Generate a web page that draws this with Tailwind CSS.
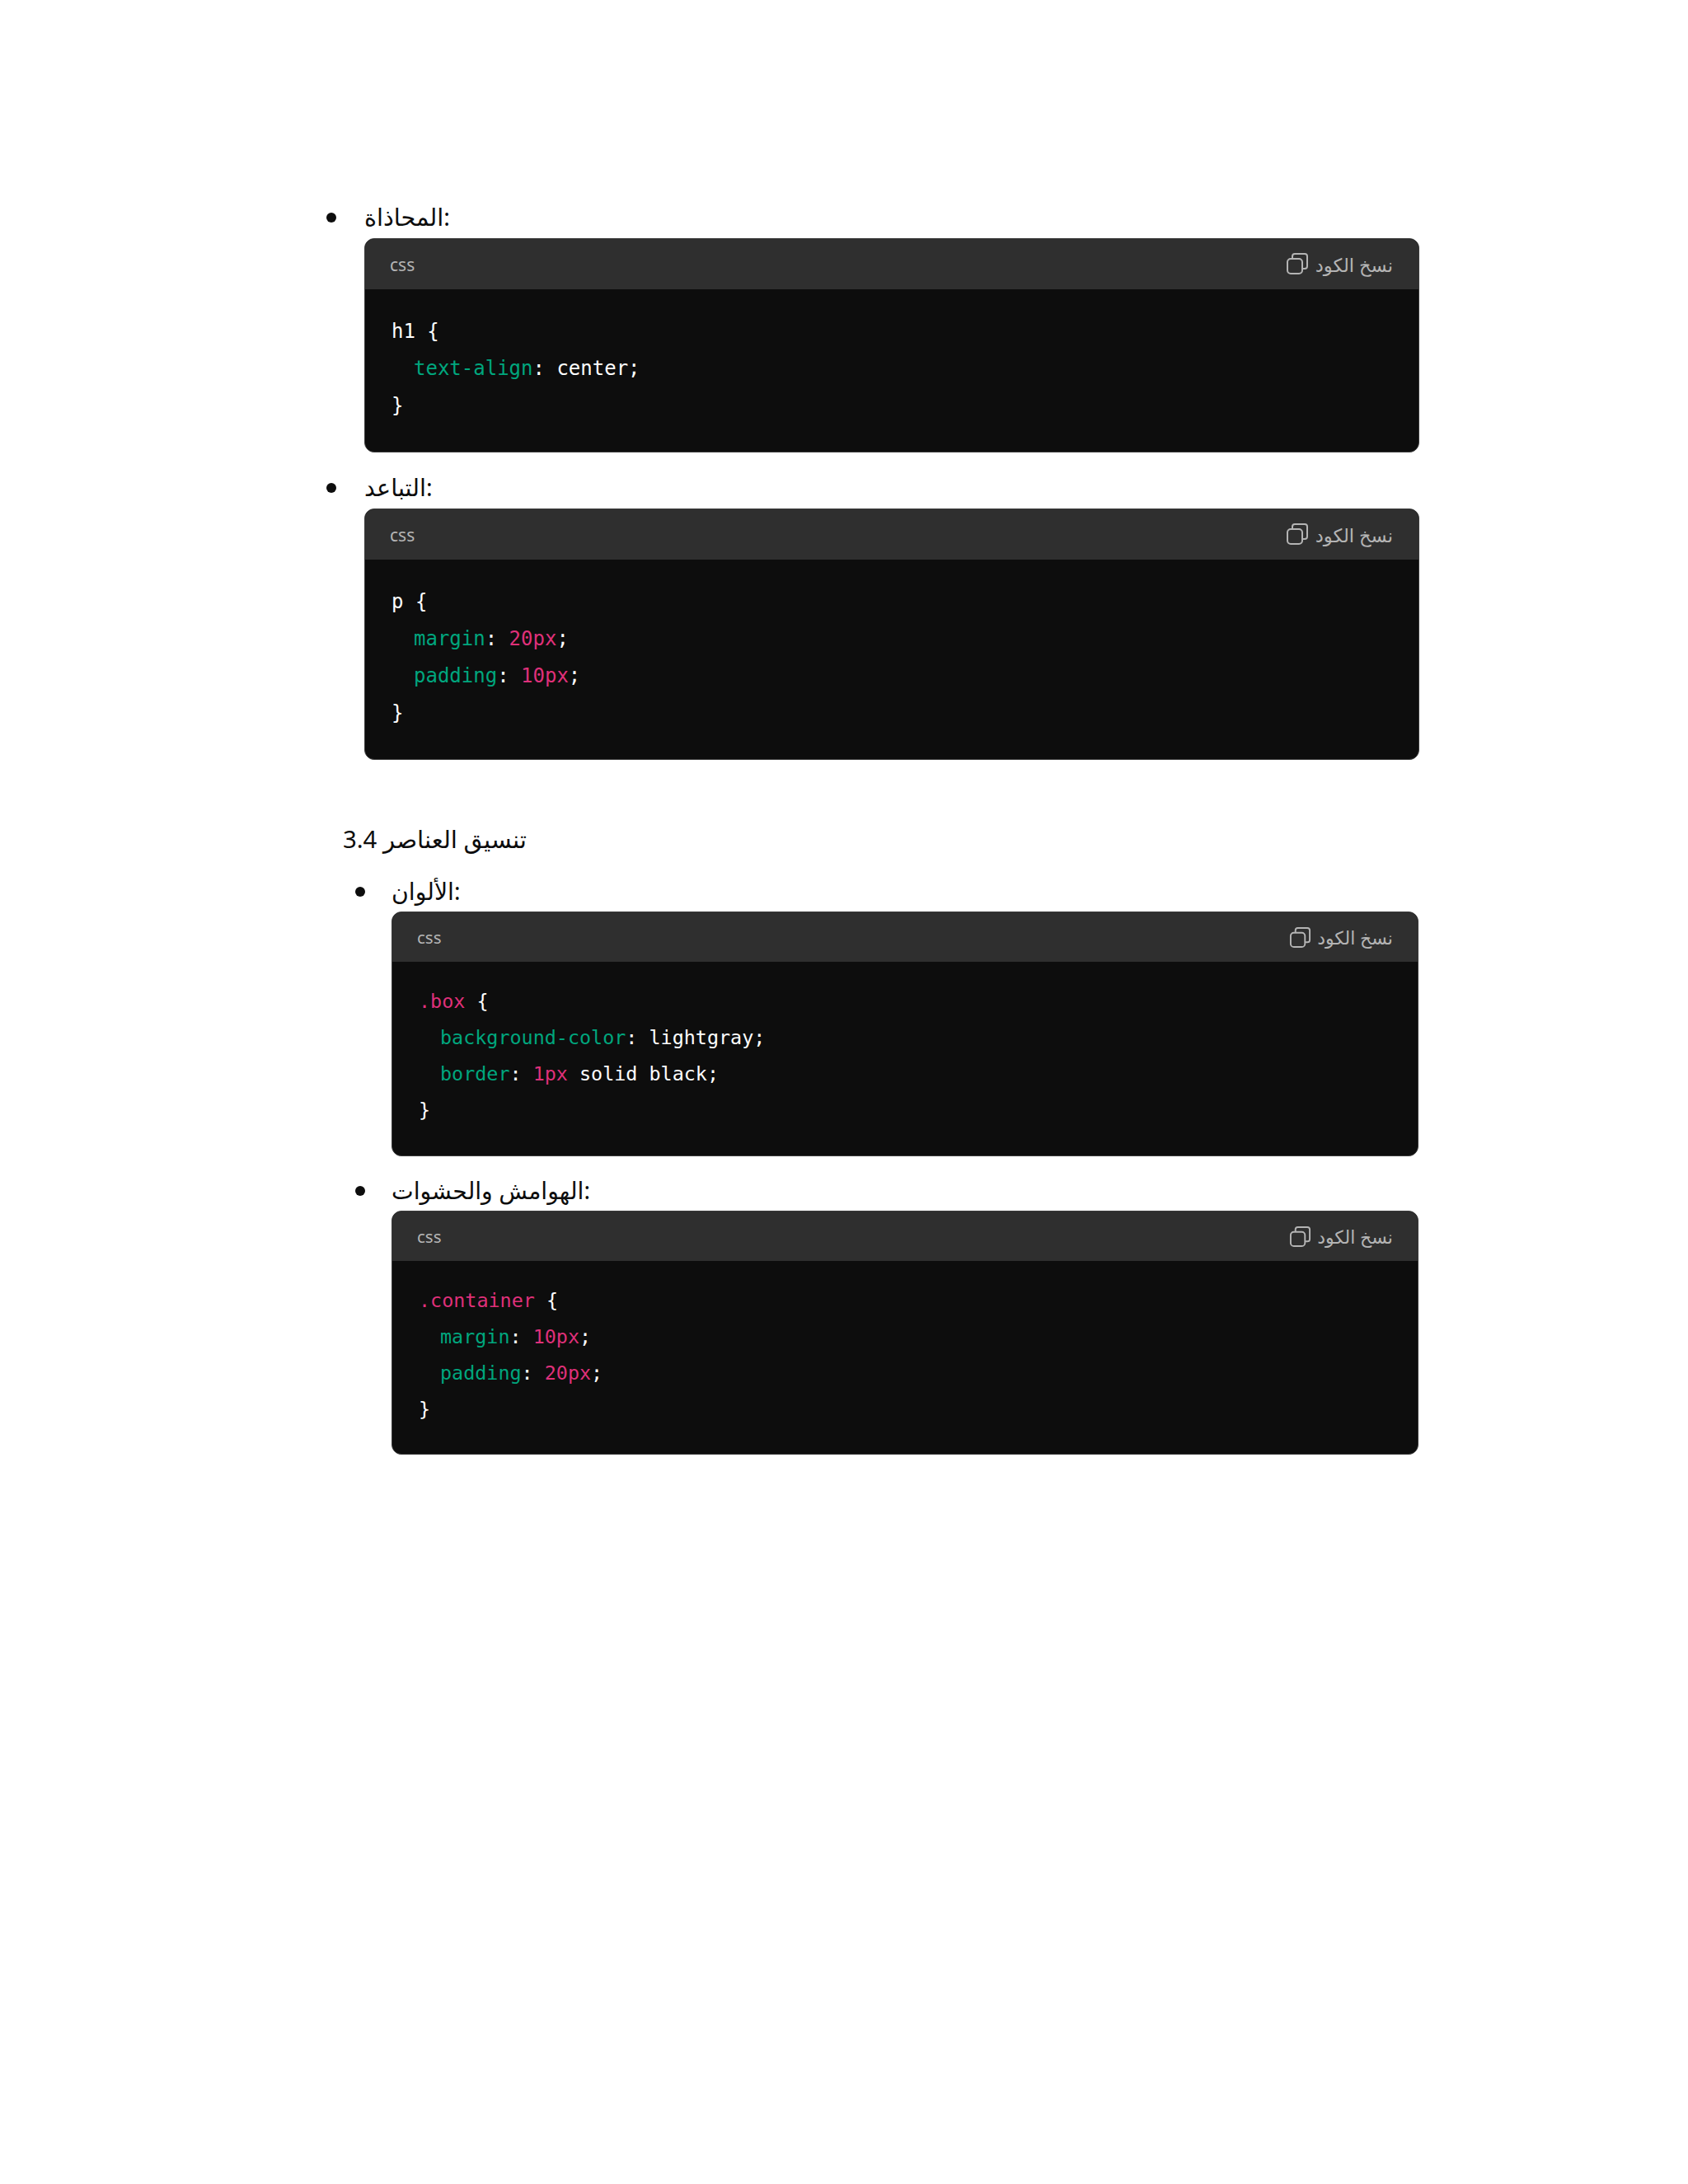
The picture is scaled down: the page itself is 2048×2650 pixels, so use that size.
<!DOCTYPE html>
<html lang="ar">
<head>
    <meta charset="UTF-8">
    <meta name="viewport" content="width=device-width, initial-scale=1.0">
    <title>CSS</title>
    <script src="https://cdn.jsdelivr.net/npm/@tailwindcss/browser@4"></script>
</head>
<body class="bg-white min-h-screen font-['Noto_Sans','DejaVu_Sans',sans-serif] text-[#0d0d0d]">
    <main class="w-[2048px] h-[2650px] pt-[244px]">

        <!-- First list -->
        <section class="ml-[396px] w-[1326px]">
            <div class="flex items-center h-[40px] mb-[5px]">
                <span class="w-3 h-3 rounded-full bg-[#0d0d0d] mr-[34px]"></span>
                <span class="text-[28.7px] leading-[36px] pb-[3px]" dir="ltr">المحاذاة:</span>
            </div>
            <div class="ml-[46px] rounded-xl overflow-hidden border border-[#3b3b3b] bg-[#0d0d0d]">
                <div class="flex items-center justify-between h-[61px] bg-[#2f2f2f] pl-[30px] pr-[31px] text-[#b4b4b4]">
                    <span class="text-[21px] pt-[3px]">css</span>
                    <div class="flex items-center gap-[8px]">
                        <svg class="w-[28px] h-[28px]" viewBox="0 0 28 28" fill="none" stroke="#b4b4b4" stroke-width="2"><rect x="2" y="8" width="18" height="18" rx="4"/><path d="M8 8V5a3 3 0 0 1 3-3h12a3 3 0 0 1 3 3v12a3 3 0 0 1-3 3h-3"/></svg>
                        <span class="text-[22.6px] pt-[3px]">نسخ الكود</span>
                    </div>
                </div>
                <div class="pl-[32px] pt-[29px] pb-[33px] font-['DejaVu_Sans_Mono',monospace] text-[24px] leading-[45px] text-white">
                    <div class="whitespace-pre"><span>h1 {</span></div>
                    <div class="whitespace-pre pl-[27px]"><span class="text-[#00a67d]">text-align</span><span>: center;</span></div>
                    <div class="whitespace-pre"><span>}</span></div>
                </div>
            </div>

            <div class="flex items-center h-[40px] mt-[23px] mb-[5px]">
                <span class="w-3 h-3 rounded-full bg-[#0d0d0d] mr-[34px]"></span>
                <span class="text-[28.7px] leading-[36px] pb-[3px]" dir="ltr">التباعد:</span>
            </div>
            <div class="ml-[46px] rounded-xl overflow-hidden border border-[#3b3b3b] bg-[#0d0d0d]">
                <div class="flex items-center justify-between h-[61px] bg-[#2f2f2f] pl-[30px] pr-[31px] text-[#b4b4b4]">
                    <span class="text-[21px] pt-[3px]">css</span>
                    <div class="flex items-center gap-[8px]">
                        <svg class="w-[28px] h-[28px]" viewBox="0 0 28 28" fill="none" stroke="#b4b4b4" stroke-width="2"><rect x="2" y="8" width="18" height="18" rx="4"/><path d="M8 8V5a3 3 0 0 1 3-3h12a3 3 0 0 1 3 3v12a3 3 0 0 1-3 3h-3"/></svg>
                        <span class="text-[22.6px] pt-[3px]">نسخ الكود</span>
                    </div>
                </div>
                <div class="pl-[32px] pt-[29px] pb-[33px] font-['DejaVu_Sans_Mono',monospace] text-[24px] leading-[45px] text-white">
                    <div class="whitespace-pre"><span>p {</span></div>
                    <div class="whitespace-pre pl-[27px]"><span class="text-[#00a67d]">margin</span><span>: </span><span class="text-[#df3079]">20px</span><span>;</span></div>
                    <div class="whitespace-pre pl-[27px]"><span class="text-[#00a67d]">padding</span><span>: </span><span class="text-[#df3079]">10px</span><span>;</span></div>
                    <div class="whitespace-pre"><span>}</span></div>
                </div>
            </div>
        </section>

        <!-- Section heading -->
        <h3 class="ml-[416px] mt-[76px] h-[40px] leading-[40px] text-[29.3px] font-normal" dir="ltr">3.4 تنسيق العناصر</h3>

        <!-- Second list -->
        <section class="ml-[431px] w-[1290px] mt-[24px]">
            <div class="flex items-center h-[40px] mb-[4px]">
                <span class="w-3 h-3 rounded-full bg-[#0d0d0d] mr-[32px]"></span>
                <span class="text-[28.3px] leading-[36px] pb-[2px]" dir="ltr">الألوان:</span>
            </div>
            <div class="ml-[44px] rounded-xl overflow-hidden border border-[#3b3b3b] bg-[#0d0d0d]">
                <div class="flex items-center justify-between h-[60px] bg-[#2f2f2f] px-[30px] text-[#b4b4b4]">
                    <span class="text-[20.5px] pt-[1px]">css</span>
                    <div class="flex items-center gap-[7px]">
                        <svg class="w-[27px] h-[27px]" viewBox="0 0 28 28" fill="none" stroke="#b4b4b4" stroke-width="2"><rect x="2" y="8" width="18" height="18" rx="4"/><path d="M8 8V5a3 3 0 0 1 3-3h12a3 3 0 0 1 3 3v12a3 3 0 0 1-3 3h-3"/></svg>
                        <span class="text-[22px] pt-[1px]">نسخ الكود</span>
                    </div>
                </div>
                <div class="pl-[32px] pt-[26px] pb-[33px] font-['DejaVu_Sans_Mono',monospace] text-[23.4px] leading-[44px] text-white">
                    <div class="whitespace-pre"><span class="text-[#df3079]">.box</span><span> {</span></div>
                    <div class="whitespace-pre pl-[26px]"><span class="text-[#00a67d]">background-color</span><span>: lightgray;</span></div>
                    <div class="whitespace-pre pl-[26px]"><span class="text-[#00a67d]">border</span><span>: </span><span class="text-[#df3079]">1px</span><span> solid black;</span></div>
                    <div class="whitespace-pre"><span>}</span></div>
                </div>
            </div>

            <div class="flex items-center h-[40px] mt-[22px] mb-[4px]">
                <span class="w-3 h-3 rounded-full bg-[#0d0d0d] mr-[32px]"></span>
                <span class="text-[28.3px] leading-[36px] pb-[2px]" dir="ltr">الهوامش والحشوات:</span>
            </div>
            <div class="ml-[44px] rounded-xl overflow-hidden border border-[#3b3b3b] bg-[#0d0d0d]">
                <div class="flex items-center justify-between h-[60px] bg-[#2f2f2f] px-[30px] text-[#b4b4b4]">
                    <span class="text-[20.5px] pt-[1px]">css</span>
                    <div class="flex items-center gap-[7px]">
                        <svg class="w-[27px] h-[27px]" viewBox="0 0 28 28" fill="none" stroke="#b4b4b4" stroke-width="2"><rect x="2" y="8" width="18" height="18" rx="4"/><path d="M8 8V5a3 3 0 0 1 3-3h12a3 3 0 0 1 3 3v12a3 3 0 0 1-3 3h-3"/></svg>
                        <span class="text-[22px] pt-[1px]">نسخ الكود</span>
                    </div>
                </div>
                <div class="pl-[32px] pt-[26px] pb-[32px] font-['DejaVu_Sans_Mono',monospace] text-[23.4px] leading-[44px] text-white">
                    <div class="whitespace-pre"><span class="text-[#df3079]">.container</span><span> {</span></div>
                    <div class="whitespace-pre pl-[26px]"><span class="text-[#00a67d]">margin</span><span>: </span><span class="text-[#df3079]">10px</span><span>;</span></div>
                    <div class="whitespace-pre pl-[26px]"><span class="text-[#00a67d]">padding</span><span>: </span><span class="text-[#df3079]">20px</span><span>;</span></div>
                    <div class="whitespace-pre"><span>}</span></div>
                </div>
            </div>
        </section>
    </main>
</body>
</html>
